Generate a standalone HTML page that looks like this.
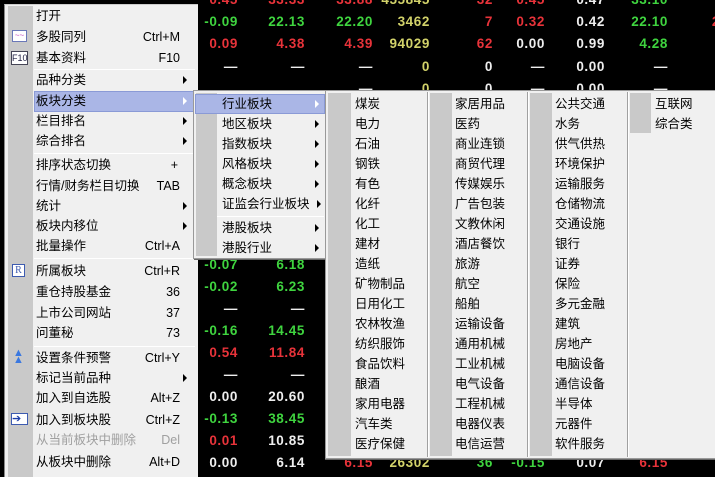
<!DOCTYPE html>
<html><head><meta charset="utf-8"><style>
*{margin:0;padding:0;box-sizing:border-box}
body{width:715px;height:477px;overflow:hidden;background:#000;position:relative;font-family:"Liberation Sans","Noto Sans CJK SC",sans-serif;font-size:12.5px;color:#000}
.n{position:absolute;font-family:"Liberation Sans",sans-serif;font-weight:bold;font-size:13.5px;letter-spacing:0.6px;text-align:right;width:70px;line-height:16px}
.g{color:#3fd43f}.r{color:#e8333a}.w{color:#eee}.y{color:#d2d26a}
.menu{position:absolute;background:#f0f0f0}
.strip{position:absolute;background:#c9c9c9}
.it{position:absolute;line-height:20px;height:20px;white-space:nowrap}
.sc{position:absolute;line-height:20px;text-align:right;white-space:nowrap}
.ar{position:absolute;width:0;height:0;border-top:4px solid transparent;border-bottom:4px solid transparent;border-left:4px solid #000}
.sep{position:absolute;height:1px;background:#a0a0a0;border-bottom:1px solid #fff}
.col{position:absolute;line-height:20px;white-space:pre}
</style></head><body>
<!-- data numbers -->
<div class="n r" style="left:168px;top:-8px">0.45</div><div class="n r" style="left:235px;top:-8px">33.33</div><div class="n r" style="left:303px;top:-8px">33.88</div><div class="n y" style="left:360px;top:-8px">455845</div><div class="n r" style="left:423px;top:-8px">32</div><div class="n r" style="left:475px;top:-8px">0.45</div><div class="n w" style="left:535px;top:-8px">0.47</div><div class="n g" style="left:598px;top:-8px">33.10</div>
<div class="n g" style="left:168px;top:14px">-0.09</div><div class="n g" style="left:235px;top:14px">22.13</div><div class="n g" style="left:303px;top:14px">22.20</div><div class="n y" style="left:360px;top:14px">3462</div><div class="n r" style="left:423px;top:14px">7</div><div class="n r" style="left:475px;top:14px">0.32</div><div class="n w" style="left:535px;top:14px">0.42</div><div class="n g" style="left:598px;top:14px">22.10</div><div class="n r" style="left:650px;top:14px">2</div>
<div class="n r" style="left:168px;top:36px">0.09</div><div class="n r" style="left:235px;top:36px">4.38</div><div class="n r" style="left:303px;top:36px">4.39</div><div class="n y" style="left:360px;top:36px">94029</div><div class="n r" style="left:423px;top:36px">62</div><div class="n w" style="left:475px;top:36px">0.00</div><div class="n w" style="left:535px;top:36px">0.99</div><div class="n g" style="left:598px;top:36px">4.28</div>
<div class="n w" style="left:168px;top:59px">—</div><div class="n w" style="left:235px;top:59px">—</div><div class="n w" style="left:303px;top:59px">—</div><div class="n y" style="left:360px;top:59px">0</div><div class="n w" style="left:423px;top:59px">0</div><div class="n w" style="left:475px;top:59px">—</div><div class="n w" style="left:535px;top:59px">0.00</div><div class="n w" style="left:598px;top:59px">—</div>
<div class="n w" style="left:303px;top:81px">—</div><div class="n y" style="left:360px;top:81px">0</div><div class="n w" style="left:423px;top:81px">0</div><div class="n w" style="left:475px;top:81px">—</div><div class="n w" style="left:535px;top:81px">0.00</div><div class="n w" style="left:598px;top:81px">—</div>
<div class="n g" style="left:168px;top:257px">-0.07</div><div class="n g" style="left:235px;top:257px">6.18</div>
<div class="n g" style="left:168px;top:279px">-0.02</div><div class="n g" style="left:235px;top:279px">6.23</div>
<div class="n w" style="left:168px;top:301px">—</div><div class="n w" style="left:235px;top:301px">—</div>
<div class="n g" style="left:168px;top:323px">-0.16</div><div class="n g" style="left:235px;top:323px">14.45</div>
<div class="n r" style="left:168px;top:345px">0.54</div><div class="n r" style="left:235px;top:345px">11.84</div>
<div class="n w" style="left:168px;top:367px">—</div><div class="n w" style="left:235px;top:367px">—</div>
<div class="n w" style="left:168px;top:389px">0.00</div><div class="n w" style="left:235px;top:389px">20.60</div>
<div class="n g" style="left:168px;top:411px">-0.13</div><div class="n g" style="left:235px;top:411px">38.45</div>
<div class="n r" style="left:168px;top:433px">0.01</div><div class="n w" style="left:235px;top:433px">10.85</div>
<div class="n w" style="left:168px;top:455px">0.00</div><div class="n w" style="left:235px;top:455px">6.14</div>
<div class="n r" style="left:303px;top:455px">6.15</div><div class="n y" style="left:360px;top:455px">26302</div><div class="n g" style="left:423px;top:455px">36</div><div class="n g" style="left:475px;top:455px">-0.15</div><div class="n w" style="left:535px;top:455px">0.07</div><div class="n r" style="left:598px;top:455px">6.15</div>

<!-- main menu -->
<div class="menu" style="left:4px;top:4px;width:194px;height:473px;border-left:1px solid #888;border-top:1px solid #ccc"></div>
<div class="strip" style="left:8px;top:6px;width:25px;height:471px"></div>
<div style="position:absolute;left:34px;top:91px;width:163px;height:21px;background:#aab6e6;border:1px solid #8a9ad6"></div>
<div class="sep" style="left:34px;top:69px;width:161px"></div>
<div class="sep" style="left:34px;top:153px;width:161px"></div>
<div class="sep" style="left:34px;top:258px;width:161px"></div>
<div class="sep" style="left:34px;top:346px;width:161px"></div>
<!-- icons -->
<div style="position:absolute;left:12px;top:30px;width:15px;height:12px;border:1px solid #6a78b8;background:#fff;color:#c04ac0;font-size:8px;line-height:9px;text-align:center">~~</div>
<div style="position:absolute;left:11px;top:51px;width:17px;height:14px;border:1px solid #445;background:#fff;color:#224;font-size:9px;line-height:12px;text-align:center">F10</div>
<div style="position:absolute;left:12px;top:264px;width:13px;height:13px;border:1px solid #3d5bb0;background:#fff;color:#3d5bb0;font-size:10px;line-height:11px;text-align:center;font-family:'Liberation Serif',serif">R</div>
<div style="position:absolute;left:13px;top:350px;color:#3a78e0;font-size:11px;line-height:7px">▲<br>▲</div>
<div style="position:absolute;left:11px;top:413px;width:17px;height:12px;background:#fff;border:1px solid #3d5bb0;color:#1d3ea8;font-size:11px;line-height:10px">➔</div>

<div class="it" style="left:36px;top:6px">打开</div>
<div class="it" style="left:36px;top:27px">多股同列</div><div class="sc" style="right:535px;top:27px">Ctrl+M</div>
<div class="it" style="left:36px;top:48px">基本资料</div><div class="sc" style="right:535px;top:48px">F10</div>
<div class="it" style="left:36px;top:70px">品种分类</div><div class="ar" style="left:183px;top:76px"></div>
<div class="it" style="left:36px;top:91px">板块分类</div><div class="ar" style="left:183px;top:97px;border-left-color:#fff"></div>
<div class="it" style="left:36px;top:111px">栏目排名</div><div class="ar" style="left:183px;top:117px"></div>
<div class="it" style="left:36px;top:131px">综合排名</div><div class="ar" style="left:183px;top:137px"></div>
<div class="it" style="left:36px;top:155px">排序状态切换</div><div class="sc" style="right:537px;top:155px">+</div>
<div class="it" style="left:36px;top:176px">行情/财务栏目切换</div><div class="sc" style="right:535px;top:176px">TAB</div>
<div class="it" style="left:36px;top:196px">统计</div><div class="ar" style="left:183px;top:202px"></div>
<div class="it" style="left:36px;top:216px">板块内移位</div><div class="ar" style="left:183px;top:222px"></div>
<div class="it" style="left:36px;top:236px">批量操作</div><div class="sc" style="right:535px;top:236px">Ctrl+A</div>
<div class="it" style="left:36px;top:261px">所属板块</div><div class="sc" style="right:535px;top:261px">Ctrl+R</div>
<div class="it" style="left:36px;top:282px">重仓持股基金</div><div class="sc" style="right:535px;top:282px">36</div>
<div class="it" style="left:36px;top:303px">上市公司网站</div><div class="sc" style="right:535px;top:303px">37</div>
<div class="it" style="left:36px;top:323px">问董秘</div><div class="sc" style="right:535px;top:323px">73</div>
<div class="it" style="left:36px;top:348px">设置条件预警</div><div class="sc" style="right:535px;top:348px">Ctrl+Y</div>
<div class="it" style="left:36px;top:368px">标记当前品种</div><div class="ar" style="left:183px;top:374px"></div>
<div class="it" style="left:36px;top:388px">加入到自选股</div><div class="sc" style="right:535px;top:388px">Alt+Z</div>
<div class="it" style="left:36px;top:410px">加入到板块股</div><div class="sc" style="right:535px;top:410px">Ctrl+Z</div>
<div class="it" style="left:36px;top:430px;color:#a0a0a0">从当前板块中删除</div><div class="sc" style="right:535px;top:430px;color:#a0a0a0">Del</div>
<div class="it" style="left:36px;top:452px">从板块中删除</div><div class="sc" style="right:535px;top:452px">Alt+D</div>

<!-- submenu 2 -->
<div class="menu" style="left:193px;top:90px;width:134px;height:169px;border:1px solid #999;box-shadow:1px 1px 0 #666"></div>
<div class="strip" style="left:196px;top:93px;width:21px;height:163px"></div>
<div style="position:absolute;left:195px;top:94px;width:130px;height:20px;background:#aab6e6;border:1px solid #8a9ad6"></div>
<div class="sep" style="left:217px;top:216px;width:107px"></div>
<div class="it" style="left:222px;top:94px">行业板块</div><div class="ar" style="left:315px;top:100px;border-left-color:#fff"></div>
<div class="it" style="left:222px;top:114px">地区板块</div><div class="ar" style="left:315px;top:120px"></div>
<div class="it" style="left:222px;top:134px">指数板块</div><div class="ar" style="left:315px;top:140px"></div>
<div class="it" style="left:222px;top:154px">风格板块</div><div class="ar" style="left:315px;top:160px"></div>
<div class="it" style="left:222px;top:174px">概念板块</div><div class="ar" style="left:315px;top:180px"></div>
<div class="it" style="left:222px;top:194px">证监会行业板块</div><div class="ar" style="left:317px;top:200px"></div>
<div class="it" style="left:222px;top:218px">港股板块</div><div class="ar" style="left:315px;top:224px"></div>
<div class="it" style="left:222px;top:238px">港股行业</div><div class="ar" style="left:315px;top:244px"></div>

<!-- submenu 3 -->
<div class="menu" style="left:325px;top:90px;width:390px;height:369px;border:1px solid #999;border-right:none;box-shadow:0 1px 0 #666"></div>
<div class="strip" style="left:328px;top:93px;width:23px;height:363px"></div>
<div class="strip" style="left:430px;top:93px;width:22px;height:363px"></div>
<div class="strip" style="left:530px;top:93px;width:22px;height:363px"></div>
<div class="strip" style="left:630px;top:93px;width:21px;height:40px"></div>
<div style="position:absolute;left:427px;top:92px;width:2px;height:365px;border-left:1px solid #a0a0a0;border-right:1px solid #fff"></div>
<div style="position:absolute;left:527px;top:92px;width:2px;height:365px;border-left:1px solid #a0a0a0;border-right:1px solid #fff"></div>
<div style="position:absolute;left:627px;top:92px;width:2px;height:365px;border-left:1px solid #a0a0a0;border-right:1px solid #fff"></div>
<div class="col" style="left:355px;top:94px">煤炭
电力
石油
钢铁
有色
化纤
化工
建材
造纸
矿物制品
日用化工
农林牧渔
纺织服饰
食品饮料
酿酒
家用电器
汽车类
医疗保健</div>
<div class="col" style="left:455px;top:94px">家居用品
医药
商业连锁
商贸代理
传媒娱乐
广告包装
文教休闲
酒店餐饮
旅游
航空
船舶
运输设备
通用机械
工业机械
电气设备
工程机械
电器仪表
电信运营</div>
<div class="col" style="left:555px;top:94px">公共交通
水务
供气供热
环境保护
运输服务
仓储物流
交通设施
银行
证券
保险
多元金融
建筑
房地产
电脑设备
通信设备
半导体
元器件
软件服务</div>
<div class="col" style="left:655px;top:94px">互联网
综合类</div>
</body></html>
